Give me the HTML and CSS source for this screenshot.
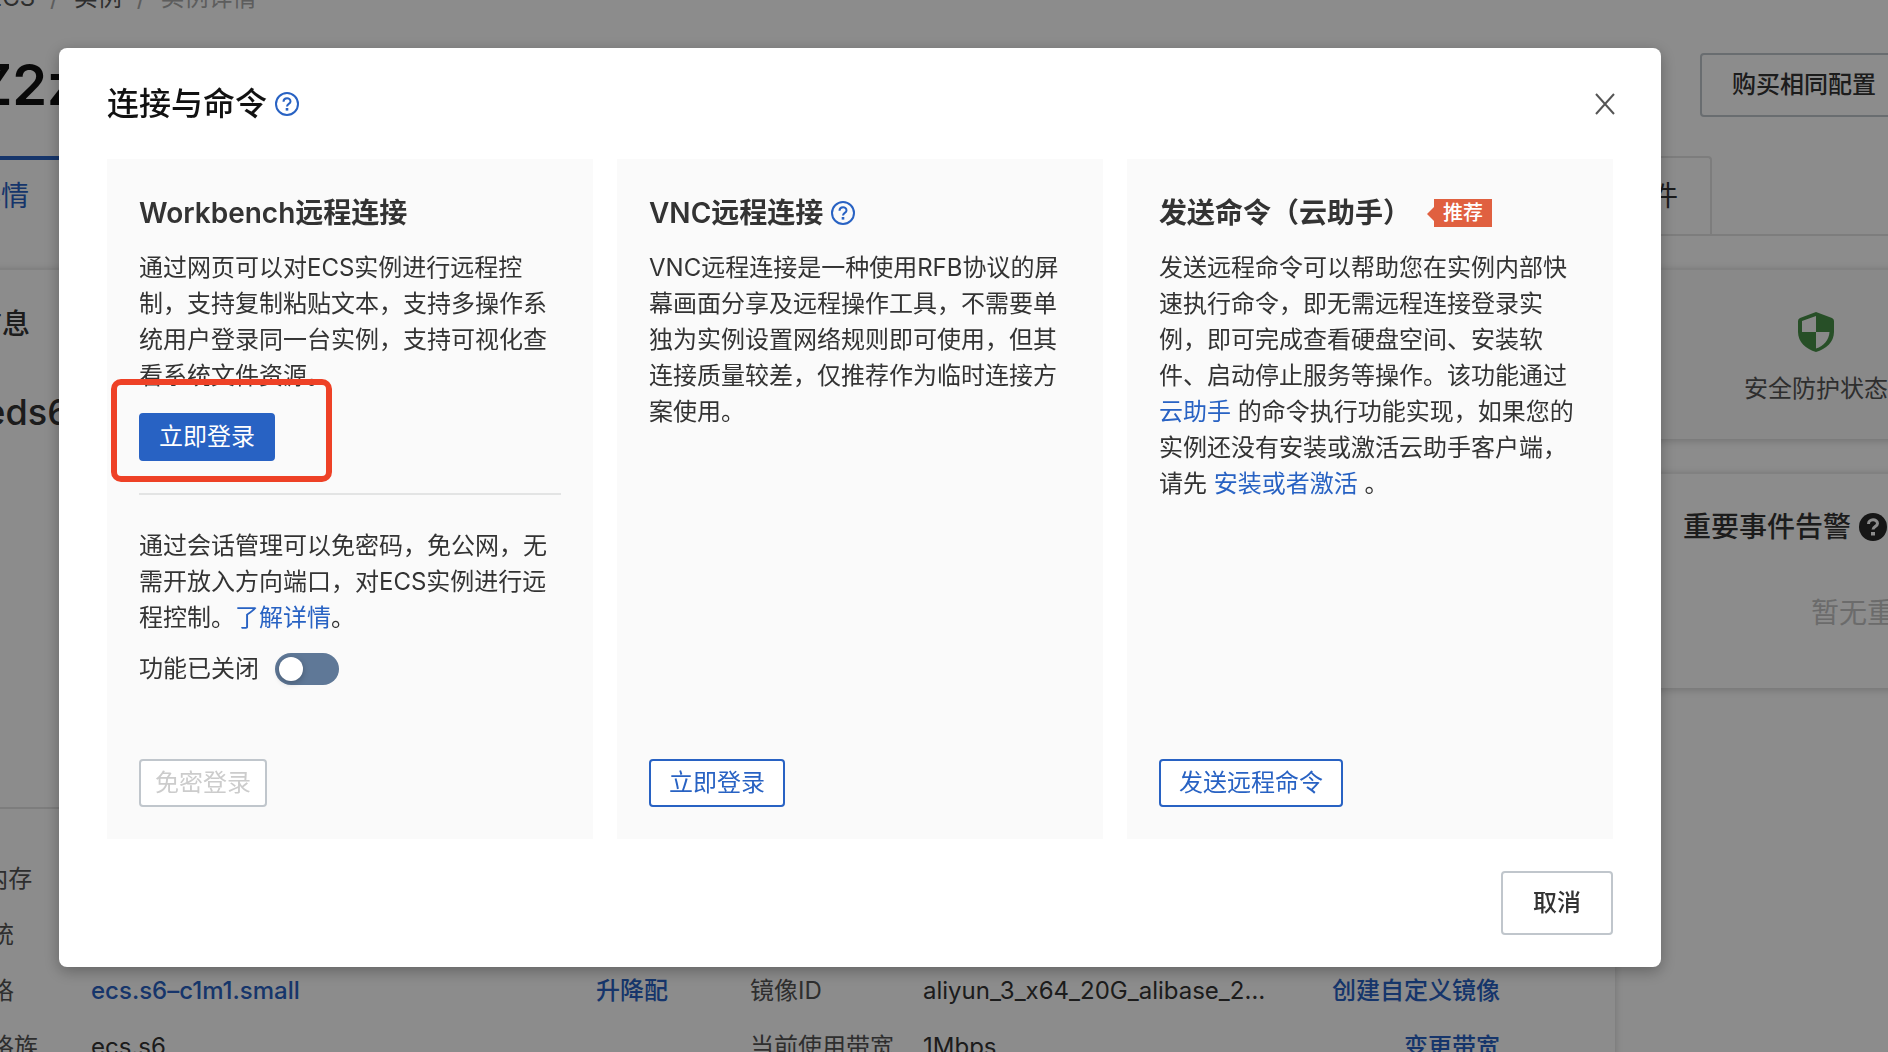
FILE: index.html
```html
<!DOCTYPE html>
<html lang="zh-CN">
<head>
<meta charset="utf-8">
<title>实例详情</title>
<link rel="stylesheet" href="styles.css">
</head>
<body>
<div class="viewport">
  <div class="page">
    <nav class="breadcrumb">
      <a href="#">云服务器 ECS</a><span class="slash">/</span><a href="#">实例</a><span class="slash">/</span><span class="current">实例详情</span>
    </nav>
    <header class="page-header">
      <h1>iZ2zeds6</h1>
      <button type="button" class="btn btn-large">购买相同配置</button>
    </header>
    <nav class="tabs">
      <a href="#" class="tab active">实例详情</a>
      <a href="#" class="tab">操作事件</a>
    </nav>
    <div class="columns">
      <section class="panel main-panel">
        <div class="basic">
          <h2>基本信息</h2>
          <p class="instance-id">i-2zeds6</p>
        </div>
        <table class="config">
          <colgroup><col class="c-label"><col class="c-value"><col class="c-action"><col class="c-label2"><col class="c-value2"><col class="c-action2"></colgroup>
          <tr><th>CPU&amp;内存</th><td></td><td></td><th></th><td></td><td></td></tr>
          <tr><th>操作系统</th><td></td><td></td><th></th><td></td><td></td></tr>
          <tr><th>实例规格</th><td><a href="#">ecs.s6–c1m1.small</a></td><td><a href="#">升降配</a></td><th>镜像ID</th><td>aliyun_3_x64_20G_alibase_2…</td><td class="end"><a href="#">创建自定义镜像</a></td></tr>
          <tr><th>实例规格族</th><td>ecs.s6</td><td></td><th>当前使用带宽</th><td>1Mbps</td><td class="end"><a href="#">变更带宽</a></td></tr>
        </table>
      </section>
      <aside class="side">
        <section class="panel status-panel">
          <div class="status">
            <svg class="shield" viewBox="0 0 36 40" aria-hidden="true"><path fill="#489148" fill-rule="evenodd" d="M18 0 34 6Q36 7 36 9V20C36 30 28 37 18 40C8 37 0 30 0 20V9Q0 7 2 6ZM18 4 4 9V20H18ZM18 20V36.500C26 34 31 28 31.500 20Z"/></svg>
            <span>安全防护状态</span>
          </div>
        </section>
        <section class="panel alarm-panel">
          <h2>重要事件告警
            <svg class="icon-solid" viewBox="0 0 28 28" aria-hidden="true"><circle cx="14" cy="14" r="14" fill="#282828"/><path d="M9.500 11c0-5.500 9-5.500 9-.5 0 3-4.500 3-4.500 6" fill="none" stroke="#fff" stroke-width="3"/><rect x="12" y="19" width="4" height="3.500" fill="#fff"/></svg>
          </h2>
          <p>暂无重要事件</p>
        </section>
      </aside>
    </div>
  </div>
</div>

<div class="overlay">
  <div class="dialog" role="dialog" aria-modal="true" aria-labelledby="dialog-title">
    <header class="dialog-header">
      <h2 id="dialog-title">连接与命令</h2>
      <svg class="icon-help" viewBox="0 0 24 24" aria-hidden="true"><circle cx="12" cy="12" r="11"/><path d="M8.500 9.800c0-4.600 7-4.600 7-.4 0 2.400-3.500 2.600-3.500 5"/><rect x="10.700" y="16" width="2.600" height="2.600"/></svg>
      <button type="button" class="close" aria-label="关闭"><svg viewBox="0 0 20 22" aria-hidden="true"><path d="M1 1 19 21M19 1 1 21"/></svg></button>
    </header>
    <div class="cards">
      <section class="card">
        <h3>Workbench远程连接</h3>
        <p>通过网页可以对ECS实例进行远程控制，支持复制粘贴文本，支持多操作系统用户登录同一台实例，支持可视化查看系统文件资源。</p>
        <div class="highlighted"><button type="button" class="btn btn-primary">立即登录</button></div>
        <hr>
        <p>通过会话管理可以免密码，免公网，无需开放入方向端口，对ECS实例进行远程控制。<a href="#">了解详情</a>。</p>
        <div class="toggle-row">
          <label for="session">功能已关闭</label>
          <input type="checkbox" id="session" class="switch" role="switch">
        </div>
        <div class="card-footer"><button type="button" class="btn btn-disabled" disabled>免密登录</button></div>
      </section>
      <section class="card">
        <h3>VNC远程连接
          <svg class="icon-help" viewBox="0 0 24 24" aria-hidden="true"><circle cx="12" cy="12" r="11"/><path d="M8.500 9.800c0-4.600 7-4.600 7-.4 0 2.400-3.500 2.600-3.500 5"/><rect x="10.700" y="16" width="2.600" height="2.600"/></svg>
        </h3>
        <p>VNC远程连接是一种使用RFB协议的屏幕画面分享及远程操作工具，不需要单独为实例设置网络规则即可使用，但其连接质量较差，仅推荐作为临时连接方案使用。</p>
        <div class="card-footer"><button type="button" class="btn btn-outline">立即登录</button></div>
      </section>
      <section class="card">
        <h3>发送命令（云助手）<span class="badge">推荐</span></h3>
        <p>发送远程命令可以帮助您在实例内部快速执行命令，即无需远程连接登录实例，即可完成查看硬盘空间、安装软件、启动停止服务等操作。该功能通过 <a href="#">云助手</a> 的命令执行功能实现，如果您的实例还没有安装或激活云助手客户端，请先 <a href="#">安装或者激活</a> 。</p>
        <div class="card-footer"><button type="button" class="btn btn-outline">发送远程命令</button></div>
      </section>
    </div>
    <footer class="dialog-footer"><button type="button" class="btn btn-large">取消</button></footer>
  </div>
</div>
</body>
</html>
```
FILE: styles.css
```css
* { box-sizing: border-box; }

body {
  margin: 0;
  background: #fff;
  color: #333;
  font-family: Inter, "Noto Sans CJK SC", sans-serif;
  font-size: 24px;
  line-height: 36px;
}

h1, h2, h3, p { margin: 0; }
a { color: #2862c3; text-decoration: none; }

/* Page behind the dialog, scrolled a little down and right */
.viewport { height: 100vh; overflow: hidden; display: flow-root; }
.page { margin: -20px -251px 0 -115px; }

.breadcrumb { display: flex; gap: 15px; }
.breadcrumb a { color: #555; }
.breadcrumb .slash, .breadcrumb .current { color: #aaa; }

.page-header {
  display: flex;
  align-items: center;
  justify-content: space-between;
  padding: 37px 231px 39px 76px;
}
.page-header h1 { font-size: 56px; line-height: 64px; font-weight: 600; color: #111; }

.tabs {
  display: flex;
  justify-content: space-between;
  padding-right: 427px;
  border-bottom: 2px solid #e4e4e4;
}
.tab {
  padding: 20px 32px;
  border: 2px solid #e4e4e4;
  border-bottom: 0;
  border-top-right-radius: 4px;
  color: #333;
  font-size: 28px;
}
.tab.active { border-top: 4px solid #2862c3; border-left: 0; color: #2862c3; padding: 18px 32px 20px; margin-bottom: -2px; background: #fff; }

.columns { display: grid; grid-template-columns: 1fr 488px; gap: 36px; align-items: start; margin-top: 32px; }
.panel { border-top: 2px solid #ececec; box-shadow: 0 2px 8px rgba(0, 0, 0, .18); background: #fff; }
.panel h2 { font-size: 28px; font-weight: 500; line-height: 40px; }

.basic { min-height: 539px; padding: 34px 33px; border-bottom: 2px solid #e4e4e4; }
.instance-id { margin-top: 44px; font-size: 36px; line-height: 48px; font-weight: 500; }

.config { width: 100%; table-layout: fixed; border-collapse: collapse; margin: 42px 0; }
.config th, .config td { height: 56px; padding: 0; font-weight: 400; text-align: left; white-space: nowrap; }
.config th { color: #555; }
.config th:first-child { padding-left: 33px; }
.config .end { text-align: right; padding-right: 115px; }
.config a { font-weight: 500; }
.c-label { width: 206px; }
.c-value { width: 505px; }
.c-action { width: 154px; }
.c-label2 { width: 173px; }
.c-value2 { width: 380px; }

.side { display: grid; gap: 33px; }
.status-panel { display: grid; grid-template-columns: 330px; background: #f9f9f9; }
.status { display: flex; flex-direction: column; align-items: center; gap: 19px; padding: 42px 0 32px; color: #555; }
.shield { width: 36px; height: 40px; }
.alarm-panel { padding: 33px 32px 57px; }
.alarm-panel h2 { display: flex; align-items: center; gap: 8px; }
.icon-solid { width: 28px; height: 28px; }
.alarm-panel p { margin-top: 48px; text-align: center; font-size: 28px; color: #c4c4c4; }

/* Dialog */
.overlay {
  position: fixed;
  inset: 0;
  padding: 48px 227px 0 59px;
  background: rgba(0, 0, 0, .45);
}
.dialog {
  padding: 32px 48px;
  border-radius: 8px;
  background: #fff;
  box-shadow: 0 4px 16px rgba(0, 0, 0, .3);
}
.dialog-header { display: flex; align-items: center; gap: 8px; height: 48px; margin-bottom: 31px; }
.dialog-header h2 { font-size: 32px; line-height: 50px; font-weight: 500; color: #111; }
.icon-help { width: 24px; height: 24px; fill: none; stroke: #2862c3; stroke-width: 2; }
.icon-help rect { fill: #2862c3; stroke: none; }
.close { margin-left: auto; padding: 0; border: 0; background: none; display: flex; cursor: pointer; }
.close svg { width: 20px; height: 22px; margin-right: -2px; fill: none; stroke: #555; stroke-width: 2; }

.cards { display: grid; grid-template-columns: repeat(3, 1fr); gap: 24px; }
.card { display: flex; flex-direction: column; min-height: 680px; padding: 32px; background: #fafafa; }
.card h3 { display: flex; align-items: center; gap: 8px; margin-bottom: 15px; font-size: 28px; line-height: 44px; font-weight: 600; }
.card hr { width: 100%; height: 2px; margin: 32px 0 33px; border: 0; background: #e3e4e4; }
.card-footer { margin-top: auto; }

.badge {
  position: relative;
  margin-left: 15px;
  padding: 0 9px;
  background: #e06040;
  color: #fff;
  font-size: 20px;
  line-height: 28px;
  font-weight: 500;
}
.badge::before {
  content: "";
  position: absolute;
  top: 8px;
  left: -7px;
  border: 7px solid transparent;
  border-left: 0;
  border-right-color: #e06040;
}

.btn {
  height: 48px;
  padding: 0 18px;
  border: 2px solid #c0c6cc;
  border-radius: 4px;
  background: #fff;
  color: #333;
  font: inherit;
  line-height: 36px;
}
.btn-large { height: 64px; padding: 0 30px; font-weight: 500; }
.page .btn-large { background: transparent; }
.btn-primary { border-color: #2862c3; background: #2862c3; color: #fff; }
.btn-outline { border-color: #2862c3; color: #2862c3; }
.btn-disabled { padding: 0 14px; color: #ccc; }

/* Marker frame drawn around the login button */
.highlighted { position: relative; align-self: start; display: flex; margin-top: 19px; }
.highlighted::after {
  content: "";
  position: absolute;
  inset: -34px -57px -21px -28px;
  border: 6px solid #ee4126;
  border-radius: 10px;
  pointer-events: none;
}

.toggle-row { display: flex; align-items: center; gap: 16px; margin-top: 15px; }
.switch {
  appearance: none;
  width: 64px;
  height: 32px;
  margin: 0;
  padding: 4px;
  border-radius: 16px;
  background: #5f7897;
}
.switch::before {
  content: "";
  display: block;
  width: 24px;
  height: 24px;
  border-radius: 50%;
  background: #fff;
  box-shadow: 0 2px 6px rgba(0, 0, 0, .25);
}
.switch:checked { background: #2862c3; }
.switch:checked::before { margin-left: 32px; }

.dialog-footer { display: flex; justify-content: flex-end; margin-top: 32px; }
```
